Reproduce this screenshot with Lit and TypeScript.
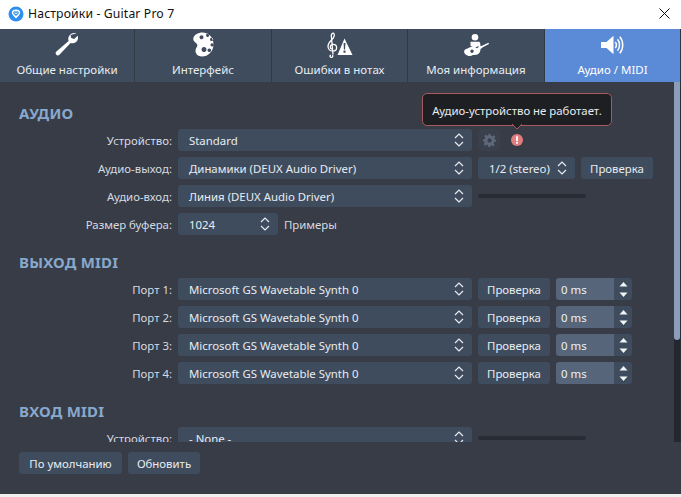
import { LitElement, html, css, svg } from "lit";
import { customElement } from "lit/decorators.js";

const chevrons = html`<svg class="chev" width="10" height="14" viewBox="0 0 10 14" fill="none" stroke="#e8ecf2" stroke-width="1.2"><path d="M1 5 L5 1 L9 5"/><path d="M1 9 L5 13 L9 9"/></svg>`;

const icons = {
  wrench: svg`<path fill="#fff" d="M21.5 1.2c-3-.9-6.2.2-7.6 3-.8 1.6-.8 3.2-.3 4.7L1.4 19.6c-1 1-1 2.4-.1 3.2.8.8 2.2.8 3.1-.1L15.6 11c1.7.6 3.6.4 5.1-.7 1.8-1.3 2.6-3.4 2.2-5.6l-.3-.9-3.4 3.1-3-1-.6-2.9z"/>`,
  palette: svg`<path fill="#fff" fill-rule="evenodd" d="M9.5.5C5 .5.6 3 .3 6.6c-.2 2.2 1.2 3.2 2.6 4.3 1.2 1 1.8 2 1.3 3.3-.7 1.500-1.700 2.600-1.700 4.600 0 3.400 2.700 5.700 6.300 5.700 6.500 0 11.700-5.200 11.700-12.300C20.500 5.500 15.700.5 9.500.5zM6.500 5.200a2 2 0 1 1 0 .01zM13 3.300a1.600 1.600 0 1 1 0 .01zM17 7.500a1.600 1.600 0 1 1 0 .01zM17.500 12.800a1.600 1.600 0 1 1 0 .01zM8.500 17.500a2.500 2.500 0 1 1 0 .01zM14.500 18.300a1.800 1.800 0 1 1 0 .01z"/>`,
  clef: svg`<g fill="none" stroke="#fff" stroke-width="1.300"><path d="M5.500 23c.8 1.500-.3 2.600-1.500 2.300-1.400-.4-1.300-2 0-2.100M6 22.500 4.300 3.500C4.300 1.500 5.800.7 6.600 1.300c1.200 1 .8 3.800-1.500 6.200C3 9.700 1 11.300 1 14.300c0 3 2.200 4.800 4.700 4.800 2.300 0 3.900-1.500 3.900-3.400 0-2-1.500-3.400-3.300-3.400-1.800 0-3 1.300-3 2.700 0 1 .6 1.900 1.500 2.200"/></g><path fill="#fff" fill-rule="evenodd" d="M17.500 6.500 25.500 23H10.500zM16.600 11l.3 6.500h1.200l.3-6.500zM16.500 18.500v2.300h2v-2.300z"/>`,
  player: svg`<circle cx="11" cy="3.300" r="3.300" fill="#fff"/><path fill="#fff" d="M6.500 7.800h8c1 0 1.600.7 1.700 1.500l.3 3.200 1.700-.8v2.200l-3.500 1.500-.3-3.400-3.500 1.700c-1-.5-2.500-1.300-4.400-1.800z"/><path fill="#fff" fill-rule="evenodd" d="M24.500 8.800 25 10l-8.500 4.500c.3 2.800-1.300 5-2.700 5.700-1.500.8-3.200.5-4.500.8-1.800.4-3 1.500-5.300.8C1.500 21.100 0 19.300.1 17.600c.1-1.800 1.800-2.500 3.100-3 1.300-.5 2.200-1.400 3.900-1.700 2-.3 4.100.1 5.500 1.300zM8 15.500a1.700 1.700 0 1 0 .01 0z"/>`,
  speaker: svg`<path fill="#fff" d="M0 7h5.500L12.500.8v18.400L5.500 13H0z"/><g fill="none" stroke="#fff" stroke-width="1.500"><path d="M14.300 7c1.300 1.700 1.300 4.300 0 6"/><path d="M16.500 4.300c2.700 3 2.700 8.400 0 11.400"/><path d="M18.800 1.800c3.900 4.500 3.900 11.900 0 16.400"/></g>`,
};

const tabs = [
  { label: "Общие настройки", icon: icons.wrench, w: 24, h: 24, vb: "0 0 24 24", top: 3 },
  { label: "Интерфейс", icon: icons.palette, w: 21, h: 25, vb: "0 0 21 25", top: 3 },
  { label: "Ошибки в нотах", icon: icons.clef, w: 26, h: 26, vb: "0 0 26 26", top: 3 },
  { label: "Моя информация", icon: icons.player, w: 25, h: 23, vb: "0 0 25 23", top: 5 },
  { label: "Аудио / MIDI", icon: icons.speaker, w: 23, h: 20, vb: "0 0 23 20", top: 6, active: true },
];

@customElement("app-root")
export class AppRoot extends LitElement {
  static styles = css`
    :host {
      display: block;
      width: 681px;
      height: 497px;
      overflow: hidden;
      background: #f0f0f0;
      font-family: "Noto Sans", "Open Sans", sans-serif;
      font-size: 11.4px;
      color: #e6eaef;
    }
    .window { height: 494px; display: flex; flex-direction: column; background: #373c46; }
    .title {
      height: 29px; flex: none; background: #fff; color: #111; display: flex; align-items: center;
      padding: 0 11px 2px 8px; box-sizing: border-box; gap: 4px; font-size: 12.2px;
    }
    .title .name { flex: 1; letter-spacing: 0.15px; }
    .tabs {
      height: 53px; flex: none; display: grid; grid-template-columns: 135px 137px 136px 137px 135px 1fr;
      background: #3f4c5e;
    }
    .tab {
      display: flex; flex-direction: column; align-items: center; position: relative;
      border-right: 1px solid #323a46; color: #e8ecf1; box-sizing: border-box;
    }
    .tab .ic { height: 33px; flex: none; display: flex; justify-content: center; box-sizing: border-box; }
    .tab .lbl { line-height: 16px; font-size: 11.5px; }
    .tab.active { background: #5b8ad6; border-right: none; color: #fff; }
    .edge { background: #2f3540; }
    .middle { height: 360px; flex: none; display: flex; }
    .scroll { flex: 1; min-width: 0; overflow: hidden; padding: 23px 0 0 19px; box-sizing: border-box; }
    .bar { width: 6px; flex: none; display: flex; flex-direction: column; background: #24272e; }
    .thumb { height: 258px; background: #8b9db8; border-radius: 0 0 3px 3px; }
    .edge2 { width: 1px; background: #2b2f37; flex: none; }
    h2 {
      margin: 0 0 8px; font-size: 15px; line-height: 16px; font-weight: 700; color: #88a8cd; letter-spacing: 0.2px;
    }
    section { margin-bottom: 19px; }
    .rows { display: flex; flex-direction: column; gap: 6px; margin-left: -19px; }
    .row { display: flex; height: 22px; align-items: center; gap: 6px; flex: none; }
    .row label { width: 172px; text-align: right; color: #d5dae1; flex: none; padding-top: 1px; }
    .field {
      height: 22px; background: #3f4c5e; border-radius: 3px; display: flex; align-items: center;
      box-sizing: border-box; padding: 1px 8px 0 11px; justify-content: space-between; flex: none; color: #e8ecf1;
    }
    .chev { margin-top: -1px; }
    .wide { width: 294px; }
    .w100 { width: 100px; }
    .w97 { width: 97px; }
    .btn {
      height: 22px; width: 72px; background: #3f4c5e; border-radius: 3px; display: flex; align-items: center;
      justify-content: center; flex: none; color: #e8ecf1; padding-top: 1px; box-sizing: border-box;
    }
    .meter { width: 108px; height: 4px; border-radius: 2px; background: #282c34; flex: none; }
    .gear {
      width: 22px; height: 22px; background: #3a414c; border-radius: 3px; display: flex; align-items: center; justify-content: center; flex: none;
    }
    .err { margin-left: 5px; width: 12px; height: 12px; position: relative; flex: none; }
    .err svg { display: block; }
    .tip {
      position: absolute; left: 50%; bottom: 20px; transform: translateX(-50%); width: 190px; height: 33px;
      box-sizing: border-box; background: #1e1f22; border: 1px solid #a8595e; border-radius: 5px; padding-top: 1px;
      display: flex; align-items: center; justify-content: center; color: #e8ecf1; white-space: nowrap;
    }
    .tip .arrow { position: absolute; left: 50%; top: 100%; margin-left: -5px; margin-top: -1px; display: block; }
    .spin { width: 76px; height: 22px; display: flex; flex: none; border-radius: 3px; overflow: hidden; }
    .spin .val { width: 58px; background: #566579; display: flex; align-items: center; padding: 1px 0 0 5px; box-sizing: border-box; color: #eef1f4; }
    .spin .arrows { flex: 1; background: #3f4c5e; display: flex; align-items: center; justify-content: center; }
    .unit { color: #d5dae1; padding-top: 1px; }
    footer { flex: 1; display: flex; gap: 6px; padding: 10px 19px; box-sizing: border-box; }
    footer .b1 { width: 103px; }
    footer .b2 { width: 72px; }
  `;

  private field(text: string, cls = "wide") {
    return html`<div class="field ${cls}"><span>${text}</span>${chevrons}</div>`;
  }

  private midiRow(n: number) {
    return html`<div class="row">
      <label>Порт ${n}:</label>
      ${this.field("Microsoft GS Wavetable Synth 0")}
      <div class="btn">Проверка</div>
      <div class="spin">
        <div class="val">0 ms</div>
        <div class="arrows">
          <svg width="9" height="17" viewBox="0 0 9 17" fill="#f2f4f7"><path d="M4.500 1 L8.500 5.500 H.5z"/><path d="M.5 11.500 H8.500 L4.500 16z"/></svg>
        </div>
      </div>
    </div>`;
  }

  render() {
    return html`<div class="window">
        <div class="title">
          <svg width="16" height="16" viewBox="0 0 16 16">
            <circle cx="8" cy="8" r="7.500" fill="#2f8fee"/>
            <path fill="#fff" d="M3.800 6.500C3.800 4.400 5.700 3.400 8 3.400s4.200 1 4.200 3.100c0 2-2.400 3.800-4.200 6-1.800-2.200-4.200-4-4.200-6z"/>
            <path fill="none" stroke="#2f8fee" stroke-width="1.100" d="M5.800 6.300c.7-.9 1.600-.5 2.200.3.600-.8 1.500-1.200 2.200-.3.500.8-.4 1.600-2.200 3-1.800-1.400-2.700-2.200-2.200-3z"/>
          </svg>
          <span class="name">Настройки - Guitar Pro 7</span>
          <svg width="11" height="11" viewBox="0 0 11 11" stroke="#111" stroke-width="1"><path d="M.5.5 10.500 10.500M10.500.5.5 10.500"/></svg>
        </div>
        <div class="tabs">
          ${tabs.map(
            (t) => html`<div class="tab ${t.active ? "active" : ""}">
              <div class="ic" style="padding-top:${t.top}px">
                <svg width=${t.w} height=${t.h} viewBox=${t.vb}>${t.icon}</svg>
              </div>
              <span class="lbl">${t.label}</span>
            </div>`
          )}
          <div class="edge"></div>
        </div>
        <div class="middle">
          <div class="scroll">
            <section>
              <h2>АУДИО</h2>
              <div class="rows">
                <div class="row">
                  <label>Устройство:</label>
                  ${this.field("Standard")}
                  <div class="gear">
                    <svg width="13" height="13" viewBox="0 0 24 24" fill="#5d687b"><path fill-rule="evenodd" d="M10 0h4l.7 3.400 2.300 1 2.900-1.900 2.800 2.800-1.900 2.900 1 2.300L24 10v4l-3.400.7-1 2.300 1.900 2.900-2.800 2.800-2.900-1.900-2.300 1L14 24h-4l-.7-3.400-2.300-1-2.900 1.900-2.800-2.800 1.900-2.900-1-2.300L0 14v-4l3.400-.7 1-2.300-1.900-2.900 2.800-2.800 2.900 1.900 2.300-1zM12 8a4 4 0 1 0 .01 0z"/></svg>
                  </div>
                  <div class="err">
                    <svg width="12" height="12" viewBox="0 0 12 12"><circle cx="6" cy="6" r="6" fill="#e27d7f"/><rect x="5.100" y="2.200" width="1.800" height="5" fill="#fff"/><rect x="5.100" y="8" width="1.800" height="1.800" fill="#fff"/></svg>
                    <div class="tip">
                      Аудио-устройство не работает.
                      <svg class="arrow" width="10" height="6" viewBox="0 0 10 6"><path d="M0 0 L5 5 L10 0" fill="#1e1f22" stroke="#a8595e"/></svg>
                    </div>
                  </div>
                </div>
                <div class="row">
                  <label>Аудио-выход:</label>
                  ${this.field("Динамики (DEUX Audio Driver)")}
                  ${this.field("1/2 (stereo)", "w97")}
                  <div class="btn">Проверка</div>
                </div>
                <div class="row">
                  <label>Аудио-вход:</label>
                  ${this.field("Линия (DEUX Audio Driver)")}
                  <div class="meter"></div>
                </div>
                <div class="row">
                  <label>Размер буфера:</label>
                  ${this.field("1024", "w100")}
                  <span class="unit">Примеры</span>
                </div>
              </div>
            </section>
            <section>
              <h2>ВЫХОД MIDI</h2>
              <div class="rows">${[1, 2, 3, 4].map((n) => this.midiRow(n))}</div>
            </section>
            <section>
              <h2>ВХОД MIDI</h2>
              <div class="rows">
                <div class="row">
                  <label>Устройство:</label>
                  ${this.field("- None -")}
                  <div class="meter"></div>
                </div>
              </div>
            </section>
          </div>
          <div class="bar"><div class="thumb"></div></div>
          <div class="edge2"></div>
        </div>
        <footer>
          <div class="btn b1">По умолчанию</div>
          <div class="btn b2">Обновить</div>
        </footer>
      </div>`;
  }
}
